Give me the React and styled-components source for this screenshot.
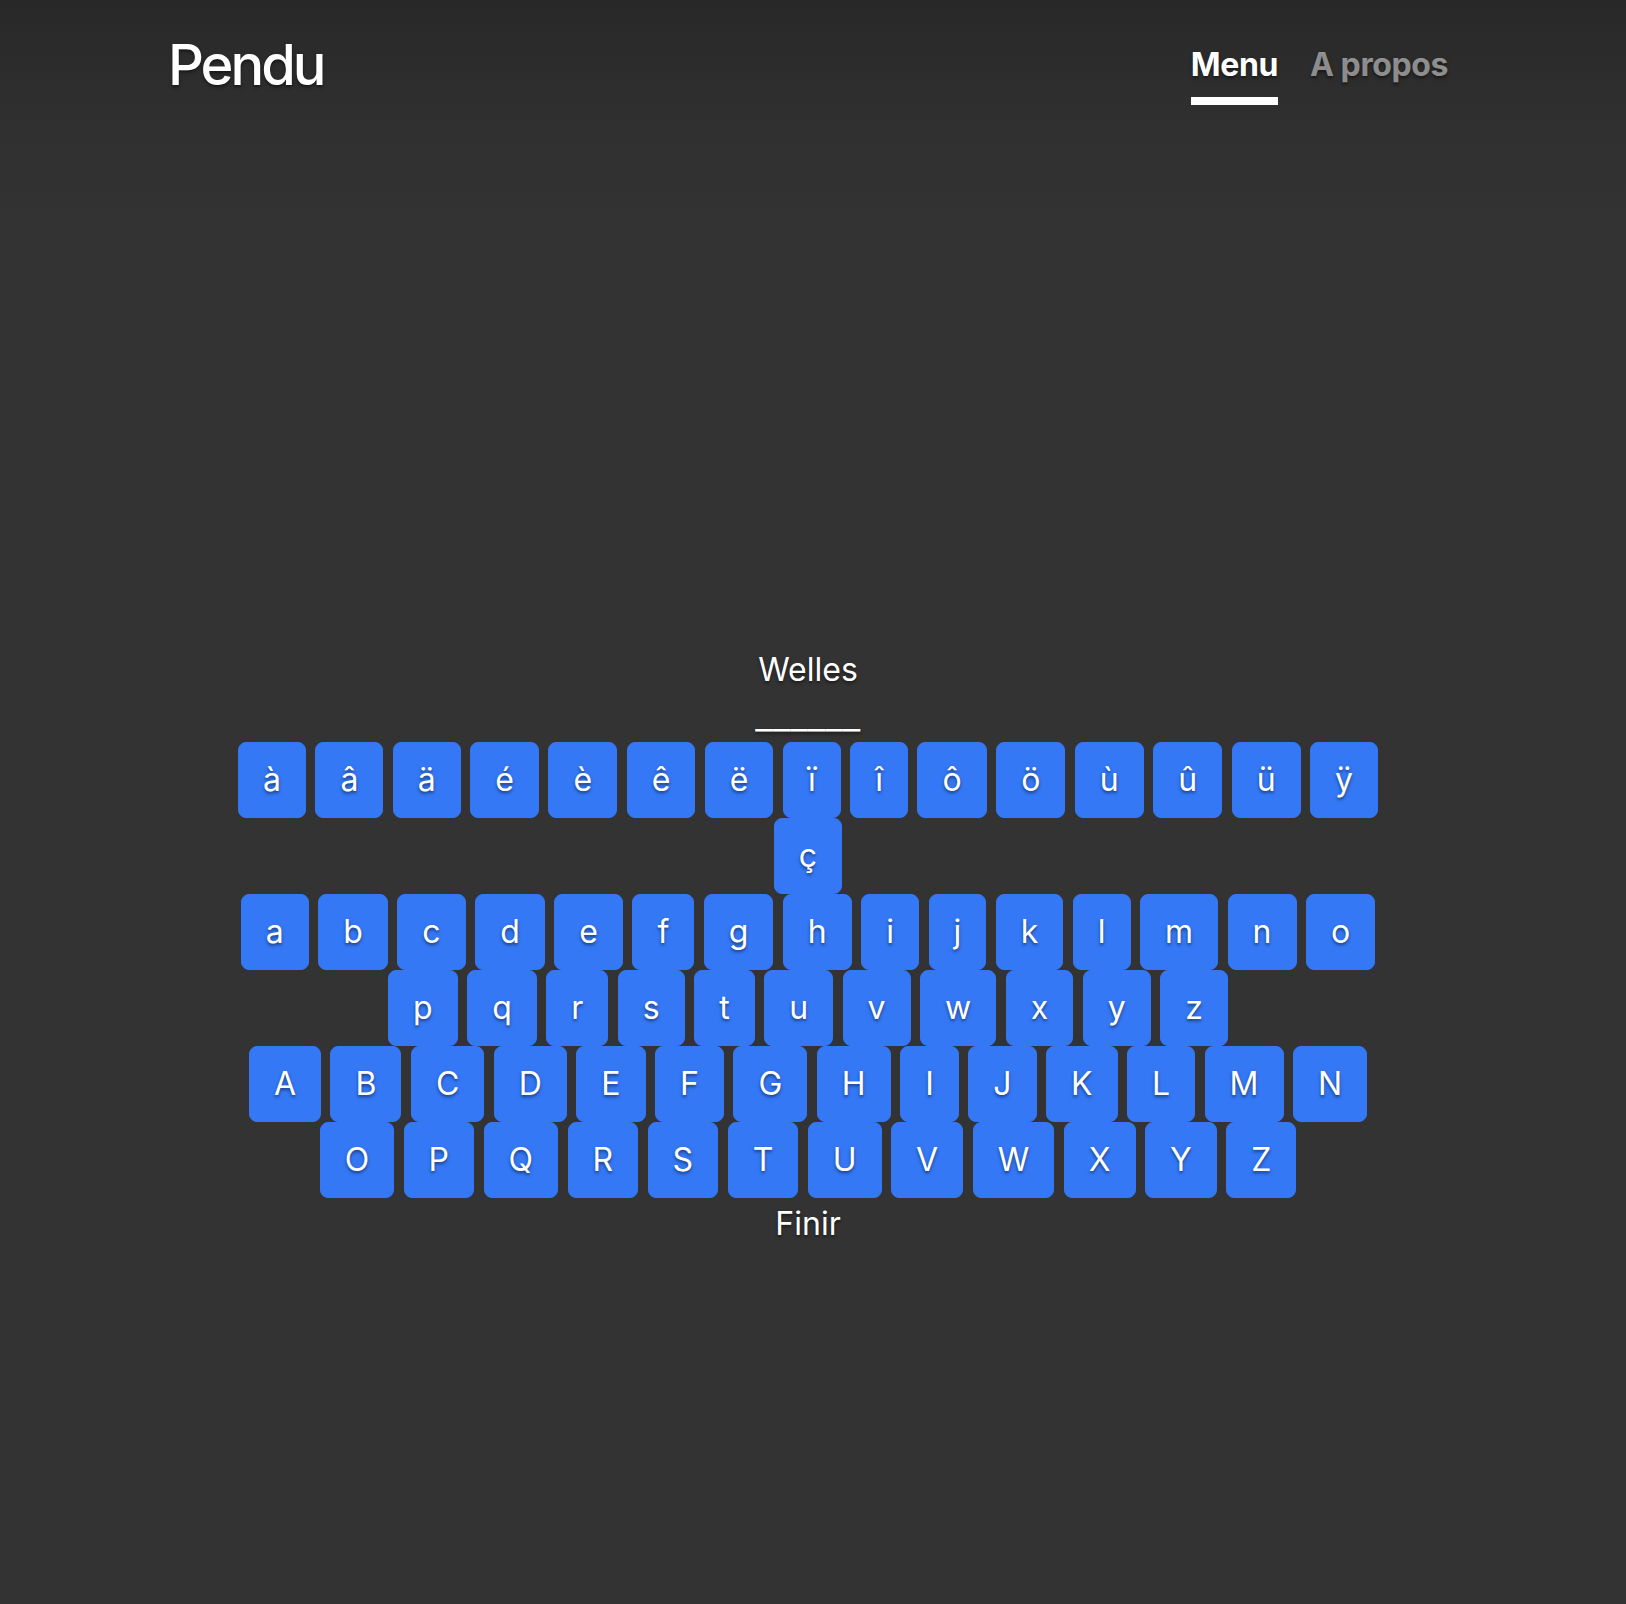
import styled, { createGlobalStyle } from 'styled-components';

const GlobalStyle = createGlobalStyle`
  html, body {
    margin: 0;
    padding: 0;
  }

  body {
    min-height: 100vh;
    background: linear-gradient(to bottom, #282828 0, #2f2f2f 110px, #333333 230px, #333333 100%);
    color: #ffffff;
    font-family: "Inter", "Liberation Sans", sans-serif;
    text-shadow: 0 1.6px 3.2px rgba(0, 0, 0, 0.5);
  }
`;

const rows = [
  ['à', 'â', 'ä', 'é', 'è', 'ê', 'ë', 'ï', 'î', 'ô', 'ö', 'ù', 'û', 'ü', 'ÿ'],
  ['ç'],
  ['a', 'b', 'c', 'd', 'e', 'f', 'g', 'h', 'i', 'j', 'k', 'l', 'm', 'n', 'o'],
  ['p', 'q', 'r', 's', 't', 'u', 'v', 'w', 'x', 'y', 'z'],
  ['A', 'B', 'C', 'D', 'E', 'F', 'G', 'H', 'I', 'J', 'K', 'L', 'M', 'N'],
  ['O', 'P', 'Q', 'R', 'S', 'T', 'U', 'V', 'W', 'X', 'Y', 'Z'],
];

export default function App() {
  const word = 'Welles';

  return (
    <>
      <GlobalStyle />
      <Page>
        <Container>
          <Masthead>
            <Brand>Pendu</Brand>
            <Nav>
              <NavLink href="#" $active>Menu</NavLink>
              <NavLink href="#">A propos</NavLink>
            </Nav>
          </Masthead>

          <Main>
            <Hint>{word}</Hint>
            <Hidden>
              <Blanks>{'_'.repeat(word.length)}</Blanks>
            </Hidden>
            <Keyboard>
              {rows.map((row, i) => (
                <Row key={i}>
                  {row.map((letter) => (
                    <Key key={letter} type="button">{letter}</Key>
                  ))}
                </Row>
              ))}
            </Keyboard>
            <Finish href="#">Finir</Finish>
          </Main>
        </Container>
      </Page>
    </>
  );
}

const Page = styled.div`
  padding-right: 10px;
  min-height: 100vh;
`;

const Container = styled.div`
  max-width: 1344px;
  margin: 0 auto;
  padding: 32px;
  box-sizing: border-box;
  display: flex;
  flex-direction: column;
`;

const Masthead = styled.header`
  display: flex;
  justify-content: space-between;
  align-items: flex-start;
`;

const Brand = styled.h3`
  margin: 0;
  font-size: 56px;
  font-weight: 500;
  line-height: 1.2;
  letter-spacing: -3px;
`;

const Nav = styled.nav`
  display: flex;
  gap: 32px;
  padding-top: 1px;
`;

const NavLink = styled.a`
  display: block;
  padding: 8px 0;
  font-size: 32px;
  font-weight: 700;
  line-height: 48px;
  letter-spacing: -0.4px;
  text-decoration: none;
  color: ${(p) => (p.$active ? '#ffffff' : 'rgba(255, 255, 255, 0.5)')};
  border-bottom: 8px solid ${(p) => (p.$active ? '#ffffff' : 'transparent')};
`;

const Main = styled.main`
  margin-top: 541px;
  display: flex;
  flex-direction: column;
  align-items: center;
  text-align: center;
`;

const Hint = styled.p`
  margin: 0;
  font-size: 32px;
  line-height: 48px;
`;

const Hidden = styled.p`
  margin: 0;
  font-size: 32px;
  line-height: 48px;
`;

const Blanks = styled.span`
  display: inline-block;
  transform: scaleX(1.2);
`;

const Keyboard = styled.div`
  display: flex;
  flex-direction: column;
  align-items: center;
`;

const Row = styled.div`
  display: flex;
  justify-content: center;
  gap: 9.5px;
`;

const Key = styled.button`
  height: 76px;
  padding: 0 24px;
  border: 1px solid #3478f6;
  border-radius: 8px;
  background: #3478f6;
  color: #ffffff;
  font-family: "Inter", "Liberation Sans", sans-serif;
  font-size: 32px;
  line-height: 48px;
  text-shadow: 0 1.6px 3.2px rgba(0, 0, 0, 0.5);
  cursor: pointer;
`;

const Finish = styled.a`
  margin-top: 2px;
  font-size: 32px;
  line-height: 48px;
  color: #ffffff;
  text-decoration: none;
`;
